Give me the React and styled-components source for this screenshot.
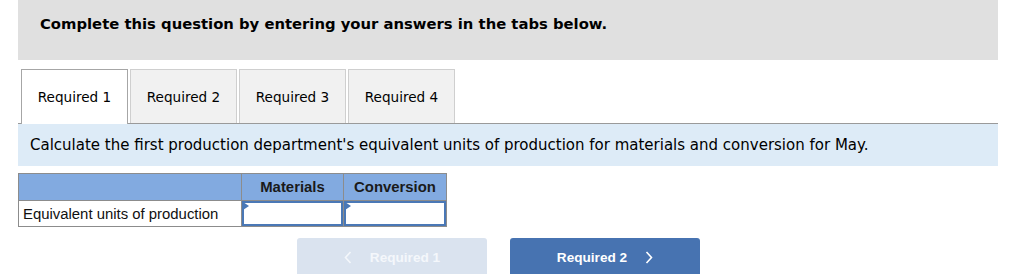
import React from "react";
import styled, { createGlobalStyle } from "styled-components";

const GlobalStyle = createGlobalStyle`
  body {
    margin: 0;
    background: #fff;
    font-family: "DejaVu Sans", Verdana, sans-serif;
    color: #000;
  }
`;

const Page = styled.div`
  width: 980px;
  margin-left: 18px;
`;

const Banner = styled.div`
  height: 60px;
  background: #e0e0e0;
  padding: 15px 0 0 22px;
  box-sizing: border-box;
  font-weight: 700;
  font-size: 14.8px;
`;

const TabBar = styled.div`
  display: flex;
  gap: 2px;
  margin-top: 9px;
  padding-left: 3px;
  border-bottom: 1px solid #9a9a9a;
`;

const Tab = styled.div`
  width: 107px;
  box-sizing: border-box;
  display: flex;
  align-items: center;
  justify-content: center;
  font-size: 13.6px;
  background: ${({ active }) => (active ? "#fff" : "#f1f1f1")};
  border: 1px solid ${({ active }) => (active ? "#a6a6a6" : "#cfcfcf")};
  border-bottom: none;
  margin-bottom: ${({ active }) => (active ? "-1px" : "0")};
  height: ${({ active }) => (active ? "55px" : "54px")};
`;

const Prompt = styled.div`
  height: 42px;
  background: #ddebf7;
  padding-left: 12px;
  display: flex;
  align-items: center;
  font-size: 15px;
`;

const Grid = styled.table`
  margin-top: 7px;
  border-collapse: collapse;
  font-family: "Liberation Sans", Arial, sans-serif;
  font-size: 14.9px;
  border: 1px solid #8c8c8c;
`;

const HeadCell = styled.th`
  background: #82aae0;
  height: 26px;
  padding: 0;
  border: 1px solid #8c8c8c;
  width: ${({ w }) => w}px;
  font-weight: 700;
  color: #1a1a1a;
`;

const LabelCell = styled.td`
  height: 25px;
  padding: 0 0 0 4px;
  border: 1px solid #8c8c8c;
  color: #111;
`;

const InputCell = styled.td`
  padding: 0;
  border: 1px solid #8c8c8c;
`;

const Field = styled.div`
  height: 25px;
  box-sizing: border-box;
  border: 2px solid #4a78b6;
  background: #fff;
  position: relative;
  &::before {
    content: "";
    position: absolute;
    left: -1px;
    top: -1px;
    border-top: 4px solid transparent;
    border-bottom: 4px solid transparent;
    border-left: 6px solid #4a78b6;
  }
`;

const Nav = styled.div`
  display: flex;
  gap: 23px;
  margin: 11px 0 0 279px;
`;

const NavButton = styled.div`
  width: 190px;
  height: 40px;
  border-radius: 3px 3px 0 0;
  display: flex;
  align-items: center;
  justify-content: center;
  gap: 18px;
  padding-bottom: 2px;
  box-sizing: border-box;
  font-family: "Liberation Sans", Arial, sans-serif;
  font-weight: 700;
  font-size: 13.6px;
  color: ${({ disabled }) => (disabled ? "#f4f7fb" : "#fff")};
  background: ${({ disabled }) => (disabled ? "#dae3ef" : "#4773b1")};
`;

const Chevron = ({ dir }) => (
  <svg width="8" height="13" viewBox="0 0 8 13">
    <path
      d={dir === "left" ? "M6.5 1 L1.5 6.5 L6.5 12" : "M1.5 1 L6.5 6.5 L1.5 12"}
      fill="none"
      stroke="currentColor"
      strokeWidth="1.6"
    />
  </svg>
);

const tabs = ["Required 1", "Required 2", "Required 3", "Required 4"];

export default function App() {
  return (
    <Page>
      <GlobalStyle />
      <Banner>Complete this question by entering your answers in the tabs below.</Banner>
      <TabBar>
        {tabs.map((t, i) => (
          <Tab key={t} active={i === 0}>
            {t}
          </Tab>
        ))}
      </TabBar>
      <Prompt>
        Calculate the first production department's equivalent units of production for materials and
        conversion for May.
      </Prompt>
      <Grid>
        <thead>
          <tr>
            <HeadCell w={222} />
            <HeadCell w={101}>Materials</HeadCell>
            <HeadCell w={102}>Conversion</HeadCell>
          </tr>
        </thead>
        <tbody>
          <tr>
            <LabelCell>Equivalent units of production</LabelCell>
            <InputCell>
              <Field />
            </InputCell>
            <InputCell>
              <Field />
            </InputCell>
          </tr>
        </tbody>
      </Grid>
      <Nav>
        <NavButton disabled>
          <Chevron dir="left" />
          Required 1
        </NavButton>
        <NavButton>
          Required 2
          <Chevron dir="right" />
        </NavButton>
      </Nav>
    </Page>
  );
}
